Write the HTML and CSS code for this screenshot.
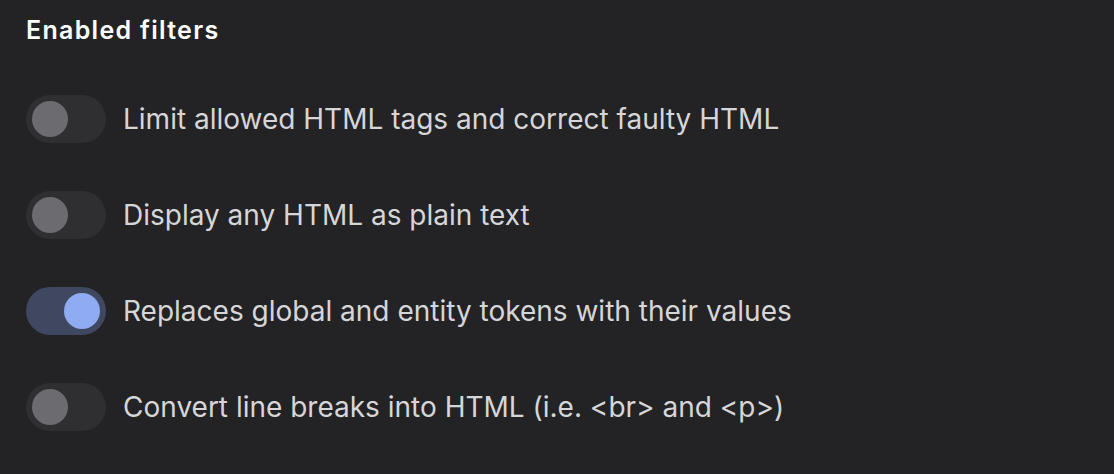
FILE: index.html
```html
<!DOCTYPE html>
<html lang="en">
<head>
  <meta charset="UTF-8">
  <title>Enabled filters</title>
  <link rel="stylesheet" href="styles.css">
</head>
<body>

  <h2 class="title">Enabled filters</h2>

  <ul class="filters">
    <li class="filter">
      <span class="toggle"><span class="knob"></span></span>
      <span class="label">Limit allowed HTML tags and correct faulty HTML</span>
    </li>
    <li class="filter">
      <span class="toggle"><span class="knob"></span></span>
      <span class="label">Display any HTML as plain text</span>
    </li>
    <li class="filter">
      <span class="toggle on"><span class="knob"></span></span>
      <span class="label">Replaces global and entity tokens with their values</span>
    </li>
    <li class="filter">
      <span class="toggle"><span class="knob"></span></span>
      <span class="label">Convert line breaks into HTML (i.e. <code>&lt;br&gt;</code> and <code>&lt;p&gt;</code>)</span>
    </li>
  </ul>

</body>
</html>
```

FILE: styles.css
```css
body {
  margin: 0;
  padding: 14px 26px;
  background-color: #232325;
  font-family: 'Inter', 'Noto Sans', sans-serif;
  color: #d6d6d8;
}

.title {
  margin: 0;
  font-size: 25px;
  font-weight: 600;
  letter-spacing: 1.3px;
  color: #ffffff;
  line-height: 32px;
}

.filters {
  list-style: none;
  margin: 49px 0 0;
  padding: 0;
  display: flex;
  flex-direction: column;
  gap: 48px;
}

.filter {
  display: flex;
  align-items: center;
  gap: 17px;
  height: 48px;
}

.toggle {
  flex: none;
  display: flex;
  align-items: center;
  box-sizing: border-box;
  width: 80px;
  height: 48px;
  padding: 6px;
  border-radius: 24px;
  background-color: #2f2f32;
}

.knob {
  width: 36px;
  height: 36px;
  border-radius: 50%;
  background-color: #6c6c70;
}

.toggle.on {
  justify-content: flex-end;
  background-color: #3f4860;
}

.toggle.on .knob { background-color: #8fabf1; }

.label {
  font-size: 28px;
  line-height: 34px;
}

code {
  font-family: 'Inter', 'Noto Sans', sans-serif;
  font-size: 28px;
}
```
